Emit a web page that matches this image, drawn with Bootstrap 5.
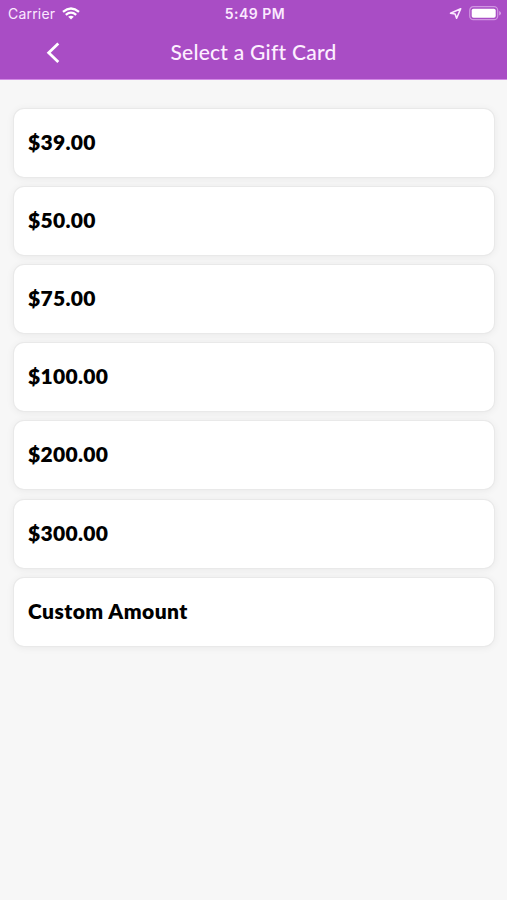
<!DOCTYPE html>
<html lang="en">
<head>
<meta charset="utf-8">
<meta name="viewport" content="width=device-width, initial-scale=1">
<title>Select a Gift Card</title>
<link href="https://cdn.jsdelivr.net/npm/bootstrap@5.3.0/dist/css/bootstrap.min.css" rel="stylesheet">
<style>
body{background:#f7f7f7;font-family:Lato,"Open Sans",sans-serif;min-height:100vh;overflow:hidden}
.app-header{background:#a94dc5;color:#fff;height:79.5px;border-bottom:1px solid #d38ae6}
.status-bar{height:27px;font-family:Inter,Roboto,sans-serif;font-size:14px;line-height:27px;display:grid;grid-template-columns:1fr auto 1fr;padding:0 5px 0 8px;color:#fbe9ff}
.carrier{letter-spacing:.2px}
.wifi-icon{margin-left:7px}
.battery-icon{margin-left:7px}
.clock{font-weight:600;letter-spacing:.5px}
.title-bar{height:51px;display:grid;grid-template-columns:60px 1fr 60px}
.page-title{font-size:21px;font-weight:500;line-height:50px;letter-spacing:.25px;color:#fdefff}
.back-btn{line-height:0}
.gift-list{padding:29.2px 13px 0 14px;gap:10.2px}
.gift-option{height:68px;border:0;border-radius:10px;box-shadow:0 0 0 1px #e9e9e9,0 1px 9px rgba(0,0,0,.075);padding:0 14px 3px;font-size:21px;font-weight:800;color:#000;line-height:1;letter-spacing:.3px}
.gift-custom{letter-spacing:.45px}
</style>
<script src="https://cdn.jsdelivr.net/npm/bootstrap@5.3.0/dist/js/bootstrap.bundle.min.js"></script>
</head>
<body>
<header class="app-header">
  <div class="status-bar">
    <div class="d-flex align-items-center"><span class="carrier">Carrier</span>
      <svg class="wifi-icon" width="18" height="13" viewBox="0 0 18 13" fill="none" stroke="#fff" stroke-width="2.3"><path d="M1 4.8Q9-1.9 17 4.8M3.8 7.8Q9 3.5 14.2 7.8"/><path d="M9 12.5 6.2 9.8Q9 7.5 11.8 9.8Z" fill="#fff" stroke="none"/></svg>
    </div>
    <span class="clock">5:49 PM</span>
    <div class="d-flex align-items-center justify-content-end">
      <svg width="13" height="13" viewBox="0 0 13 13" fill="none" stroke="#fbe9ff" stroke-width="1.6" stroke-linejoin="round"><path d="M11.7 1.8 1.500 6.200 6.100 7 7.600 11.300Z"/></svg>
      <svg class="battery-icon" width="33" height="15" viewBox="0 0 33 15"><rect x=".7" y=".7" width="28" height="13" rx="3.7" fill="none" stroke="#d095e2" stroke-width="1.2"/><rect x="2.7" y="2.7" width="24" height="9" rx="1.8" fill="#fff"/><path d="M30.2 5v4.4Q32 8.500 32 7.200 32 5.900 30.200 5Z" fill="#d9a0e8"/></svg>
    </div>
  </div>
  <div class="title-bar">
    <a class="back-btn d-flex align-items-center justify-content-end" href="#" aria-label="Back">
      <svg width="14" height="22" viewBox="0 0 14 22" fill="none" stroke="#fff" stroke-width="2.8"><path d="M12.300 1.500 2.700 10.700 12.300 19.900"/></svg>
    </a>
    <h1 class="page-title text-center m-0">Select a Gift Card</h1>
  </div>
</header>
<main class="gift-list d-flex flex-column">
  <button type="button" class="gift-option card flex-row align-items-center">$39.00</button>
  <button type="button" class="gift-option card flex-row align-items-center">$50.00</button>
  <button type="button" class="gift-option card flex-row align-items-center">$75.00</button>
  <button type="button" class="gift-option card flex-row align-items-center">$100.00</button>
  <button type="button" class="gift-option card flex-row align-items-center">$200.00</button>
  <button type="button" class="gift-option card flex-row align-items-center">$300.00</button>
  <button type="button" class="gift-option gift-custom card flex-row align-items-center">Custom Amount</button>
</main>
</body>
</html>
